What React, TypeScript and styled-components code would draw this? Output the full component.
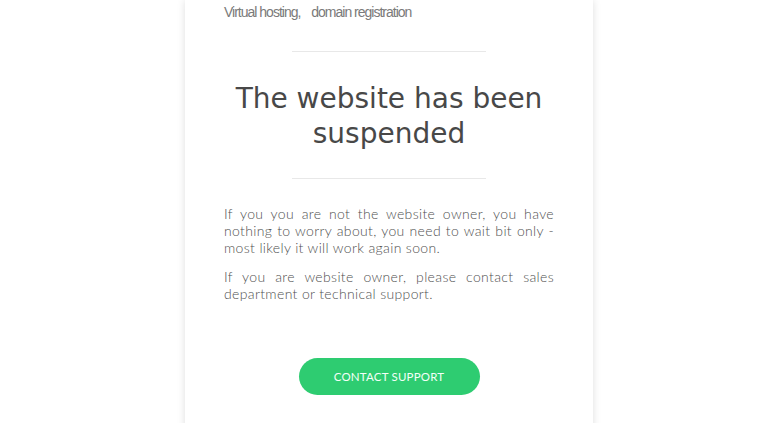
import React from 'react';
import styled, {createGlobalStyle} from 'styled-components';

const GlobalStyle = createGlobalStyle`
  html, body {
    margin: 0;
    padding: 0;
    background: #ffffff;
    overflow: hidden;
  }
`;

const Page = styled.div`
  display: flex;
  justify-content: center;
  min-height: 423px;
`;

const Card = styled.div`
  width: 408px;
  min-height: 440px;
  box-sizing: border-box;
  padding: 3px 39px 0;
  margin-left: 1px;
  background: #fff;
  box-shadow: 0 0 8px rgba(0, 0, 0, 0.13);
  display: flex;
  flex-direction: column;
`;

const Tagline = styled.div`
  font-family: "Liberation Sans", Arial, sans-serif;
  font-size: 14px;
  letter-spacing: -1px;
  color: #7a7a7a;
  line-height: 18px;
`;

const Gap = styled.span`
  display: inline-block;
  width: 8px;
`;

const Divider = styled.hr<{$top: number}>`
  width: 194px;
  height: 0;
  border: 0;
  border-top: 1px solid #e8e8e8;
  margin: ${p => p.$top}px auto 0;
`;

const Heading = styled.h1`
  margin: 29px 0 0;
  font-family: "DejaVu Sans", sans-serif;
  font-weight: normal;
  font-size: 28px;
  line-height: 35px;
  color: #484848;
  text-align: center;
`;

const Text = styled.p<{$top: number}>`
  margin: ${p => p.$top}px 0 0;
  font-family: Lato, "Open Sans", sans-serif;
  font-weight: 300;
  font-size: 14px;
  letter-spacing: 0.35px;
  line-height: 17px;
  color: #505050;
  text-align: justify;
`;

const ButtonRow = styled.div`
  display: flex;
  justify-content: center;
  margin-top: 56px;
`;

const Button = styled.button`
  width: 181px;
  height: 37px;
  border: 0;
  border-radius: 19px;
  background: #2ecc71;
  color: #f4fff8;
  font-family: Lato, "Open Sans", sans-serif;
  font-weight: 400;
  font-size: 11.5px;
  letter-spacing: 0.2px;
  text-transform: uppercase;
  cursor: pointer;
`;

export default function App() {
  return (
    <>
      <GlobalStyle/>
      <Page>
        <Card>
          <Tagline>Virtual hosting,<Gap/> domain registration</Tagline>
          <Divider $top={30}/>
          <Heading>The website has been suspended</Heading>
          <Divider $top={27}/>
          <Text $top={26}>
            If you you are not the website owner, you have nothing to worry about, you need to wait bit only -
            most likely it will work again soon.
          </Text>
          <Text $top={12}>
            If you are website owner, please contact sales department or technical support.
          </Text>
          <ButtonRow>
            <Button>Contact support</Button>
          </ButtonRow>
        </Card>
      </Page>
    </>
  );
}
